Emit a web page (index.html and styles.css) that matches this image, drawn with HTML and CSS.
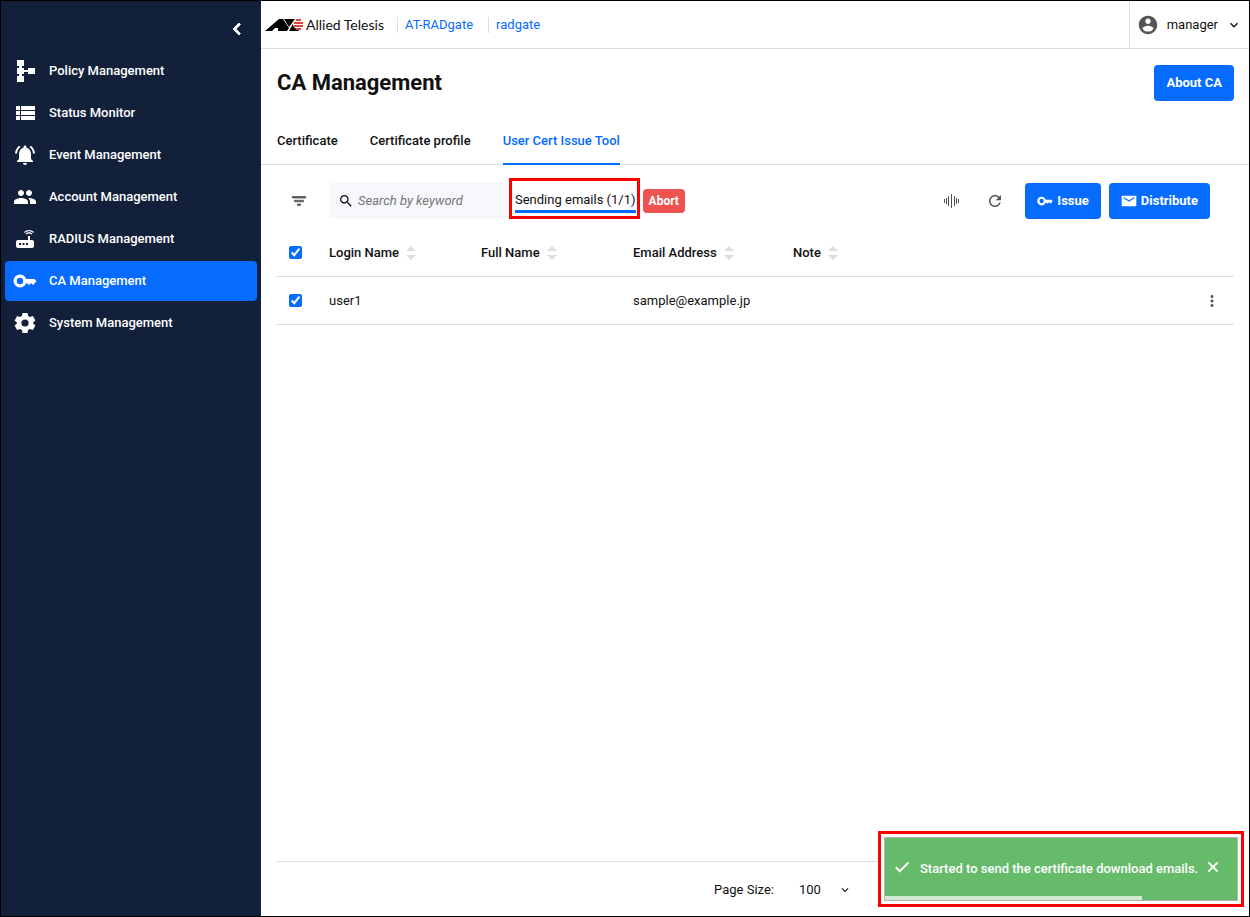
FILE: index.html
```html
<!DOCTYPE html>
<html lang="en">
<head>
  <meta charset="UTF-8">
  <meta name="viewport" content="width=device-width, initial-scale=1.0">
  <title>CA Management</title>
  <link rel="stylesheet" href="styles.css">
</head>
<body>
  <!-- Shared icons -->
  <svg class="sprite" aria-hidden="true">
    <symbol id="key" viewBox="0 0 24 24"><path fill-rule="evenodd" d="M7 5.500a6.500 6.500 0 1 0 6 9h1.500l1.500 1.500 2-2 2 2 3.500-3.800L21.500 10H13A6.500 6.500 0 0 0 7 5.500zm0 3.300a3.200 3.200 0 1 1 0 6.400 3.200 3.200 0 0 1 0-6.400z"/></symbol>
    <symbol id="down" viewBox="0 0 24 24"><path d="M7.410 8.590L12 13.170l4.590-4.580L18 10l-6 6-6-6z"/></symbol>
    <symbol id="sort" viewBox="0 0 10 14"><path d="M0 5l5-5 5 5zM0 9h10l-5 5z"/></symbol>
  </svg>

  <!-- Sidebar -->
  <aside class="sidebar">
    <button class="collapse" aria-label="Collapse menu">
      <svg class="icon" viewBox="0 0 24 24"><path d="M15.410 7.410L14 6l-6 6 6 6 1.410-1.410L10.830 12z" stroke="currentColor"/></svg>
    </button>
    <nav class="menu">
      <a href="#"><svg class="icon" viewBox="0 0 24 24"><path d="M4 1h7v6H9v2h2v2h4V9h7v6h-7v-2h-4v2H9v2h2v6H4v-6h2v-2H4V9h2V7H4z"/></svg>Policy Management</a>
      <a href="#"><svg class="icon" viewBox="0 0 24 24"><path d="M3 5h4v4H3zM8 5h14v4H8zM3 10h4v4H3zM8 10h14v4H8zM3 15h4v4H3zM8 15h14v4H8z"/></svg>Status Monitor</a>
      <a href="#"><svg class="icon" viewBox="0 0 24 24"><path d="M7.580 4.080L6.150 2.650C3.750 4.480 2.170 7.300 2.030 10.500h2c.15-2.650 1.510-4.970 3.550-6.420zm12.390 6.420h2c-.15-3.200-1.730-6.020-4.120-7.850l-1.420 1.430c2.020 1.450 3.390 3.770 3.540 6.420zM18 11c0-3.070-1.640-5.640-4.500-6.320V4c0-.83-.67-1.500-1.500-1.500s-1.500.67-1.500 1.500v.68C7.630 5.360 6 7.920 6 11v5l-2 2v1h16v-1l-2-2v-5zm-6 11c.14 0 .27-.01.4-.04.65-.14 1.180-.58 1.440-1.180.1-.24.15-.5.15-.78h-4c.01 1.100.9 2 2.010 2z"/></svg>Event Management</a>
      <a href="#"><svg class="icon" viewBox="0 0 24 24"><path d="M16 11c1.660 0 2.990-1.340 2.990-3S17.660 5 16 5c-1.660 0-3 1.340-3 3s1.340 3 3 3zm-8 0c1.660 0 2.990-1.340 2.990-3S9.660 5 8 5C6.340 5 5 6.340 5 8s1.340 3 3 3zm0 2c-2.330 0-7 1.170-7 3.500V19h14v-2.500c0-2.330-4.670-3.500-7-3.500zm8 0c-.29 0-.62.02-.97.05 1.160.84 1.970 1.970 1.970 3.450V19h6v-2.500c0-2.330-4.670-3.500-7-3.500z"/></svg>Account Management</a>
      <a href="#"><svg class="icon" viewBox="0 0 24 24"><path d="M20.200 5.900l.8-.8C19.600 3.700 17.800 3 16 3s-3.600.7-5 2.100l.8.8C13 4.800 14.500 4.200 16 4.200s3 .6 4.200 1.700zm-.9.8c-.9-.9-2.100-1.400-3.300-1.400s-2.400.5-3.300 1.400l.8.8c.7-.7 1.600-1 2.500-1s1.800.3 2.500 1l.8-.8zM19 13h-2V9h-2v4H5c-1.100 0-2 .9-2 2v4c0 1.100.9 2 2 2h14c1.100 0 2-.9 2-2v-4c0-1.100-.9-2-2-2zM8 18H6v-2h2v2zm3.500 0h-2v-2h2v2zm3.500 0h-2v-2h2v2z"/></svg>RADIUS Management</a>
      <a href="#" class="active"><svg class="icon"><use href="#key"/></svg>CA Management</a>
      <a href="#"><svg class="icon" viewBox="0 0 24 24"><path fill-rule="evenodd" d="M9.500 2h5l.6 3 1.900 1.100 2.900-1 2.500 4.300-2.300 2v1.200l2.300 2-2.500 4.300-2.900-1-1.900 1.100-.6 3h-5l-.6-3L7 17.900l-2.900 1-2.500-4.300 2.300-2v-1.200l-2.300-2 2.500-4.300 2.900 1L8.900 5zM12 8.400a3.600 3.600 0 1 0 0 7.200 3.600 3.600 0 0 0 0-7.200z"/></svg>System Management</a>
    </nav>
  </aside>

  <div class="page">
    <header class="topbar">
      <div class="logo">
        <svg viewBox="0 0 38 12" aria-hidden="true">
          <path d="M0 12L14 0h4l6 9-2 3h-9V9h-3l-3 3zM19 0h11l-6 8zM24 12l5-9 5 9z"/>
          <circle cx="33" cy="5" r="5" fill="#fff"/>
          <path d="M31 1h5M29 4h9M29 7h9M31 10h5" stroke="#e0433e" stroke-width="2"/>
        </svg>
        <span>Allied Telesis</span>
      </div>
      <a class="crumb" href="#">AT-RADgate</a>
      <a class="crumb" href="#">radgate</a>
      <button class="account">
        <svg class="icon user" viewBox="0 0 24 24"><path d="M12 2C6.480 2 2 6.480 2 12s4.480 10 10 10 10-4.480 10-10S17.520 2 12 2zm0 3c1.660 0 3 1.340 3 3s-1.340 3-3 3-3-1.340-3-3 1.340-3 3-3zm0 14.200c-2.500 0-4.710-1.280-6-3.220.03-1.990 4-3.080 6-3.080 1.990 0 5.970 1.090 6 3.080-1.290 1.940-3.500 3.220-6 3.220z"/></svg>
        manager
        <svg class="icon small"><use href="#down"/></svg>
      </button>
    </header>

    <div class="title-row">
      <h1>CA Management</h1>
      <button class="btn">About CA</button>
    </div>

    <nav class="tabs">
      <a href="#">Certificate</a>
      <a href="#">Certificate profile</a>
      <a href="#" class="active">User Cert Issue Tool</a>
    </nav>

    <main class="content">
      <div class="toolbar">
        <button class="icon-btn filter" aria-label="Filter">
          <svg class="icon medium" viewBox="0 0 24 24"><path d="M10 18h4v-2h-4v2zM3 6v2h18V6H3zm3 7h12v-2H6v2z" stroke="currentColor"/></svg>
        </button>
        <label class="search">
          <svg class="icon small" viewBox="0 0 24 24"><path d="M15.500 14h-.79l-.28-.27C15.410 12.590 16 11.110 16 9.500 16 5.910 13.090 3 9.500 3S3 5.910 3 9.500 5.910 16 9.500 16c1.610 0 3.090-.59 4.230-1.570l.27.28v.79l5 4.990L20.490 19l-4.990-5zm-6 0C7.010 14 5 11.990 5 9.500S7.010 5 9.500 5 14 7.010 14 9.500 11.990 14 9.500 14z"/></svg>
          <input type="text" placeholder="Search by keyword" aria-label="Search by keyword">
        </label>
        <div class="sending"><span>Sending emails (1/1)</span></div>
        <button class="abort">Abort</button>
        <div class="actions">
          <button class="icon-btn" aria-label="Column width">
            <svg class="icon small" viewBox="0 0 16 16"><path d="M1 6h1v4H1zM3 5h1v6H3zM5 3h1v10H5zM8 1h1v14H8zM11 3h1v10h-1zM13 5h1v6h-1zM15 6h1v4h-1z"/></svg>
          </button>
          <button class="icon-btn" aria-label="Refresh">
            <svg class="icon medium" viewBox="0 0 24 24"><path d="M17.650 6.350C16.200 4.900 14.210 4 12 4c-4.420 0-7.990 3.580-7.990 8s3.570 8 7.990 8c3.730 0 6.840-2.550 7.730-6h-2.080c-.82 2.330-3.040 4-5.650 4-3.310 0-6-2.690-6-6s2.690-6 6-6c1.660 0 3.140.69 4.220 1.780L13 11h7V4l-2.350 2.350z"/></svg>
          </button>
          <button class="btn"><svg class="icon small"><use href="#key"/></svg>Issue</button>
          <button class="btn"><svg class="icon small" viewBox="0 0 24 24"><path d="M1 4h22v16H1zM4 6v2l8 5 8-5V6l-8 5z" fill-rule="evenodd"/></svg>Distribute</button>
        </div>
      </div>

      <table>
        <colgroup>
          <col class="col-check"><col class="col-name"><col class="col-name"><col class="col-mail"><col><col class="col-menu">
        </colgroup>
        <thead>
          <tr>
            <th><input type="checkbox" checked aria-label="Select all"></th>
            <th>Login Name<svg class="sort"><use href="#sort"/></svg></th>
            <th>Full Name<svg class="sort"><use href="#sort"/></svg></th>
            <th>Email Address<svg class="sort"><use href="#sort"/></svg></th>
            <th>Note<svg class="sort"><use href="#sort"/></svg></th>
            <th></th>
          </tr>
        </thead>
        <tbody>
          <tr>
            <td><input type="checkbox" checked aria-label="Select user1"></td>
            <td>user1</td>
            <td></td>
            <td>sample@example.jp</td>
            <td></td>
            <td>
              <button class="icon-btn" aria-label="Row menu">
                <svg class="icon medium" viewBox="0 0 24 24"><path d="M12 8c1.100 0 2-.9 2-2s-.9-2-2-2-2 .9-2 2 .9 2 2 2zm0 2c-1.100 0-2 .9-2 2s.9 2 2 2 2-.9 2-2-.9-2-2-2zm0 6c-1.100 0-2 .9-2 2s.9 2 2 2 2-.9 2-2-.9-2-2-2z"/></svg>
              </button>
            </td>
          </tr>
        </tbody>
      </table>

      <footer class="pager">
        <label for="page-size">Page Size:</label>
        <div class="select">
          <select id="page-size"><option>100</option></select>
          <svg class="icon tiny"><use href="#down"/></svg>
        </div>
      </footer>
    </main>
  </div>

  <!-- Notification -->
  <div class="toast-frame">
    <div class="toast" role="status">
      <svg class="icon medium" viewBox="0 0 24 24"><path d="M9 16.170L4.830 12l-1.420 1.410L9 19 21 7l-1.410-1.410z" stroke="currentColor"/></svg>
      <span>Started to send the certificate download emails.</span>
      <button aria-label="Close"><svg class="icon small" viewBox="0 0 24 24"><path d="M5 5l14 14M19 5L5 19" stroke="currentColor" stroke-width="3"/></svg></button>
      <div class="progress"></div>
    </div>
  </div>
</body>
</html>
```

FILE: styles.css
```css
* {
  margin: 0;
  padding: 0;
  box-sizing: border-box;
}
body {
  display: flex;
  min-height: 100vh;
  border: 1px solid #000;
  font: 13px/20px Roboto, sans-serif;
  color: #111;
  background: #fff;
}
a {
  color: inherit;
  text-decoration: none;
}
button {
  border: none;
  background: none;
  font: inherit;
  color: inherit;
  cursor: pointer;
}
.sprite {
  position: absolute;
  width: 0;
  height: 0;
}
.icon {
  width: 24px;
  height: 24px;
  fill: currentColor;
  flex: none;
}
.icon.medium { width: 18px; height: 18px; }
.icon.small { width: 16px; height: 16px; }
.icon.tiny { width: 14px; height: 14px; }

/* Sidebar */
.sidebar {
  flex: none;
  width: 260px;
  padding: 16px 4px;
  background: #12203a;
  color: #fff;
}
.collapse {
  display: flex;
  margin: 0 8px 10px auto;
}
.menu {
  display: flex;
  flex-direction: column;
  gap: 2px;
}
.menu a {
  display: flex;
  align-items: center;
  gap: 12px;
  height: 40px;
  padding: 0 8px;
  border-radius: 4px;
  font-weight: 500;
}
.menu a.active {
  background: #066bff;
}

/* Top bar */
.page {
  flex: 1;
  display: flex;
  flex-direction: column;
  min-width: 0;
}
.topbar {
  display: flex;
  align-items: center;
  height: 48px;
  padding-left: 4px;
  border-bottom: 1px solid #ddd;
}
.logo {
  display: flex;
  align-items: center;
  gap: 3px;
  width: 132px;
  font: 14px/20px Lato, sans-serif;
  white-space: nowrap;
}
.logo svg {
  width: 38px;
  height: 12px;
}
.crumb {
  padding: 0 15px 0 7px;
  line-height: 16px;
  border-left: 1px solid #ddd;
  color: #066bff;
}
.account {
  display: flex;
  align-items: center;
  gap: 8px;
  align-self: stretch;
  margin-left: auto;
  padding: 1px 7px 0;
  border-left: 1px solid #ddd;
}
.account .user {
  width: 22px;
  height: 22px;
  color: #555;
}

/* Title and tabs */
.title-row {
  display: flex;
  align-items: center;
  justify-content: space-between;
  padding: 16px 15px 16px 16px;
}
h1 {
  font-size: 22px;
  line-height: 28px;
  font-weight: 700;
}
.btn {
  display: flex;
  align-items: center;
  gap: 4px;
  height: 36px;
  padding: 0 12px;
  border-radius: 4px;
  background: #066bff;
  color: #fff;
  font-weight: 700;
}
.tabs {
  display: flex;
  gap: 32px;
  padding: 0 16px;
  border-bottom: 1px solid #ddd;
  font-weight: 500;
}
.tabs a {
  height: 48px;
  margin-bottom: -1px;
  line-height: 48px;
}
.tabs a.active {
  color: #066bff;
  border-bottom: 2px solid #066bff;
}

/* Toolbar */
.content {
  flex: 1;
  display: flex;
  flex-direction: column;
  padding: 18px 15px 0 16px;
}
.toolbar {
  display: flex;
  align-items: center;
  height: 36px;
  margin-bottom: 10px;
}
.icon-btn {
  display: flex;
  align-items: center;
  justify-content: center;
  width: 44px;
  height: 36px;
  color: #555;
}
.filter {
  margin-right: 8px;
}
.search {
  display: flex;
  align-items: center;
  gap: 4px;
  width: 178px;
  height: 36px;
  padding-left: 9px;
  border-radius: 2px;
  background: #f6f8fc;
}
.search input {
  width: 100%;
  border: none;
  outline: none;
  background: none;
  font: inherit;
}
.search input::placeholder {
  font-style: italic;
  color: #757575;
}
.sending {
  margin: 0 3px 5px 2px;
  padding: 9px 1px 3px 3px;
  border: 3px solid #f00;
}
.sending span {
  display: block;
  border-bottom: 3px solid #066bff;
  white-space: nowrap;
}
.abort {
  height: 24px;
  padding: 0 6px;
  border-radius: 4px;
  background: #ef5350;
  color: #fff;
  font-size: 12px;
  font-weight: 700;
}
.actions {
  display: flex;
  margin: 0 24px 0 auto;
}
.actions .btn {
  margin-left: 8px;
}

/* Table */
table {
  width: 100%;
  table-layout: fixed;
  border-spacing: 0;
}
th,
td {
  height: 48px;
  border-bottom: 1px solid #ddd;
  text-align: left;
  vertical-align: middle;
}
th {
  font-weight: 500;
}
.col-check { width: 52px; }
.col-name { width: 152px; }
.col-mail { width: 160px; }
.col-menu { width: 44px; }
table input {
  display: block;
  width: 13px;
  height: 13px;
  margin-left: 12px;
  accent-color: #066bff;
}
.sort {
  width: 10px;
  height: 14px;
  margin-left: 7px;
  fill: #ddd;
  vertical-align: middle;
}

/* Pager */
.pager {
  display: flex;
  align-items: center;
  justify-content: flex-end;
  gap: 25px;
  height: 55px;
  margin-top: auto;
  padding: 2px 382px 0 0;
  border-top: 1px solid #ddd;
}
.select {
  display: flex;
  align-items: center;
}
.select select {
  width: 39px;
  border: none;
  background: none;
  appearance: none;
  font: inherit;
  color: inherit;
}

/* Toast */
.toast-frame {
  position: fixed;
  right: 6px;
  bottom: 10px;
  padding: 3px;
  border: 3px solid #f00;
  background: #fff;
}
.toast {
  position: relative;
  display: flex;
  align-items: center;
  width: 354px;
  height: 64px;
  padding: 0 16px 0 8px;
  border: 1px solid #b5b5b5;
  background: #66bb6a;
  color: #fff;
  font-weight: 500;
}
.toast .icon {
  margin-bottom: 4px;
}
.toast span {
  flex: 1;
  margin-left: 9px;
}
.toast button {
  display: flex;
}
.progress {
  position: absolute;
  left: 0;
  bottom: 0;
  width: 73%;
  height: 4px;
  background: rgba(255, 255, 255, 0.7);
}
```
